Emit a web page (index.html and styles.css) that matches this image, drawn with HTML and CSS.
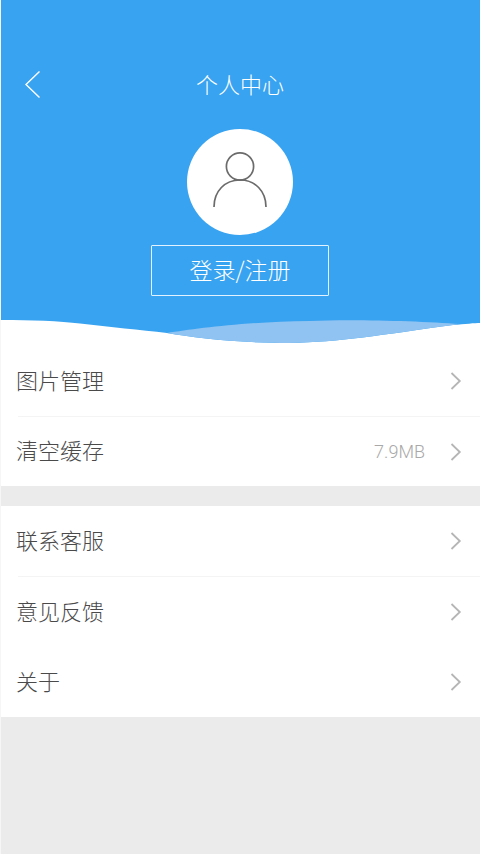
FILE: index.html
```html
<!DOCTYPE html>
<html lang="zh-CN">
<head>
<meta charset="utf-8">
<title>个人中心</title>
<link rel="stylesheet" href="styles.css">
</head>
<body>
<div class="page">
  <header class="hero">
    <div class="topbar">
      <svg class="back" width="18" height="30" viewBox="0 0 18 30"><path d="M15.5 1.5 2 14.5 15.5 27.5" fill="none" stroke="#fff" stroke-width="1.4"/></svg>
      <h1 class="title">个人中心</h1>
    </div>
    <div class="avatar">
      <svg width="56" height="60" viewBox="0 0 56 60"><circle cx="28" cy="14.5" r="13.6" fill="none" stroke="#6b6b6b" stroke-width="1.7"/><path d="M2 55C2 39 13 28 28 28S54 39 54 55" fill="none" stroke="#6b6b6b" stroke-width="1.7"/></svg>
    </div>
    <button class="login">登录/注册</button>
    <svg class="wave" width="480" height="26" viewBox="0 0 480 26"><path d="M0 0C30 0 60 1 80 3.500 110 7 140 10 167 13 195 18 240 23 290 23 340 22 380 15 453 5 465 4 475 3 480 3V26H0Z" fill="#fff"/><path d="M167 13C195 9 240 2 310 1 350-1 420 1 460 4L453 5C380 15 340 22 290 23 240 23 195 18 167 13Z" fill="#90c3f1"/></svg>
  </header>
  <section class="group">
    <div class="row first"><span class="label">图片管理</span><svg class="chev" width="12" height="18" viewBox="0 0 12 18"><path d="M1.500 1 9.800 9 1.500 17" fill="none" stroke="#b5b5b5" stroke-width="1.800"/></svg></div>
    <div class="row short"><span class="label">清空缓存</span><span class="value">7.9MB</span><svg class="chev" width="12" height="18" viewBox="0 0 12 18"><path d="M1.500 1 9.800 9 1.500 17" fill="none" stroke="#b5b5b5" stroke-width="1.800"/></svg></div>
  </section>
  <section class="group">
    <div class="row first"><span class="label">联系客服</span><svg class="chev" width="12" height="18" viewBox="0 0 12 18"><path d="M1.500 1 9.800 9 1.500 17" fill="none" stroke="#b5b5b5" stroke-width="1.800"/></svg></div>
    <div class="row"><span class="label">意见反馈</span><svg class="chev" width="12" height="18" viewBox="0 0 12 18"><path d="M1.500 1 9.800 9 1.500 17" fill="none" stroke="#b5b5b5" stroke-width="1.800"/></svg></div>
    <div class="row"><span class="label">关于</span><svg class="chev" width="12" height="18" viewBox="0 0 12 18"><path d="M1.500 1 9.800 9 1.500 17" fill="none" stroke="#b5b5b5" stroke-width="1.800"/></svg></div>
  </section>
</div>
</body>
</html>
```
FILE: styles.css
```css
html, body { margin: 0; padding: 0; }
body { background: #ecebeb; font-family: "Noto Sans CJK SC", "Noto Sans", sans-serif; }
.page { box-sizing: border-box; width: 480px; height: 854px; overflow: hidden; display: flex; flex-direction: column; border-left: 1px solid #f6f6f6; }
.hero { flex: none; background: #38a3f1; height: 346px; margin-left: -1px; display: flex; flex-direction: column; align-items: center; position: relative; }
.hero::before { content: ""; position: absolute; left: 0; top: 0; width: 1px; height: 320px; background: #2e96c4; }
.topbar { width: 100%; height: 30px; margin-top: 70px; display: flex; align-items: center; justify-content: center; position: relative; }
.back { position: absolute; left: 24px; top: 0; }
.title { margin: 0 0 4px; font-size: 22px; font-weight: 300; color: #fff; line-height: 26px; }
.avatar { width: 106px; height: 106px; margin-top: 29px; border-radius: 50%; background: #fff; display: flex; align-items: center; justify-content: center; }
.login { width: 178px; height: 51px; margin-top: 10px; padding: 0 0 3px; border: 1px solid #e2f2fe; border-radius: 1px; background: transparent; color: #fff; font-family: inherit; font-size: 23px; font-weight: 300; }
.wave { position: absolute; left: 0; top: 320px; display: block; }
.group { background: #fff; margin-bottom: 20px; }
.row { height: 70px; margin-left: 17px; padding-right: 18px; display: flex; align-items: center; }
.row.first { border-bottom: 1px solid #f4f4f4; }
.row.short { height: 69px; }
.label { font-size: 22px; font-weight: 300; color: #4a4a4a; flex: 1; margin-left: -2px; margin-bottom: 5px; }
.value { font-family: Roboto, sans-serif; font-weight: 300; font-size: 18px; color: #a9a9a9; margin-right: 25px; }
.chev { display: block; }
```
